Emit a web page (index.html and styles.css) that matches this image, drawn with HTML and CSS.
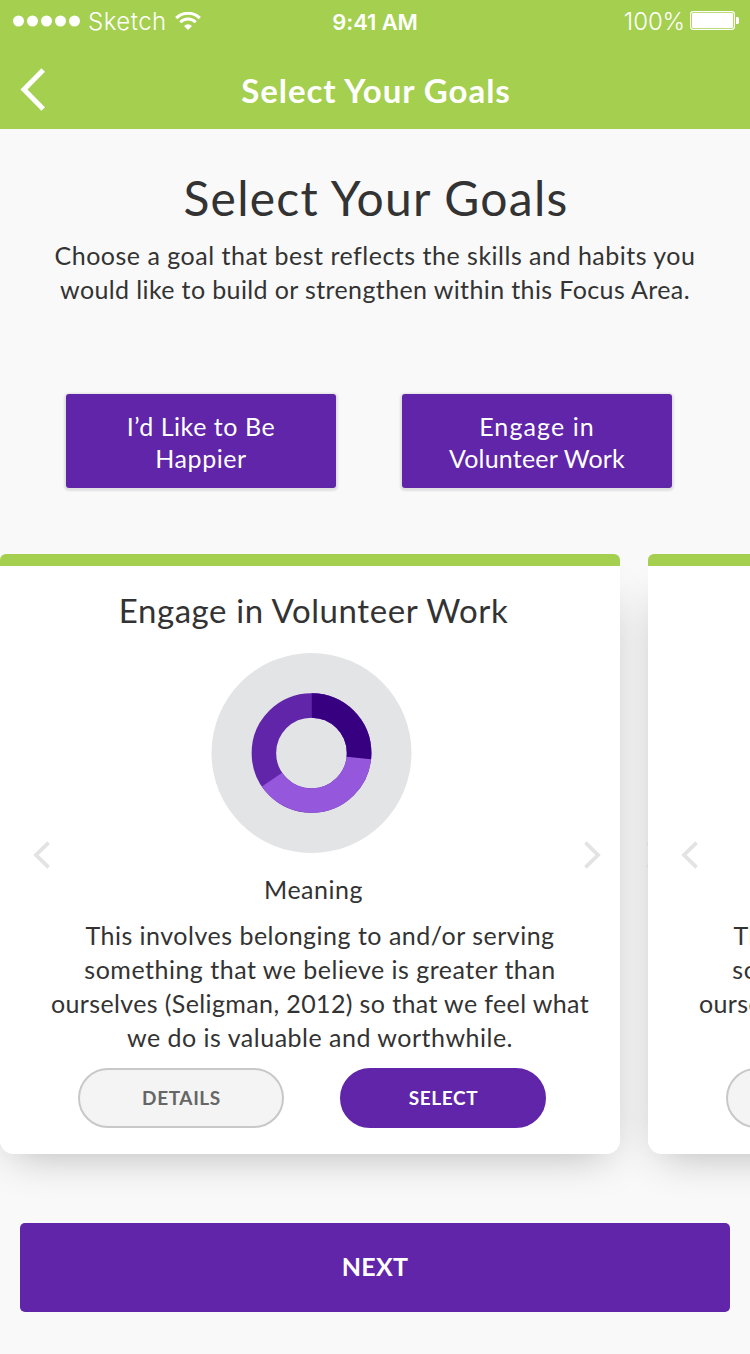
FILE: index.html
```html
<!DOCTYPE html>
<html lang="en">
<head>
<meta charset="utf-8">
<title>Select Your Goals</title>
<link rel="stylesheet" href="styles.css">
</head>
<body>
<header class="topbar">
  <div class="status">
    <div class="status-left">
      <svg class="dots" width="68" height="12" viewBox="0 0 68 12" fill="#fff"><circle cx="5.5" cy="6" r="5.5"/><circle cx="19.5" cy="6" r="5.5"/><circle cx="33.5" cy="6" r="5.5"/><circle cx="47.5" cy="6" r="5.5"/><circle cx="61.5" cy="6" r="5.5"/></svg>
      <span class="carrier">Sketch</span>
      <svg class="wifi" width="26" height="18" viewBox="0 0 26 18" fill="none" stroke="#fff"><path d="M1.2 6.2a16.6 16.6 0 0 1 23.6 0" stroke-width="3.1"/><path d="M5.3 10.3a10.8 10.8 0 0 1 15.4 0" stroke-width="2.9"/><path d="M13 18l-4-4.1a5.7 5.7 0 0 1 8 0z" fill="#fff" stroke="none"/></svg>
    </div>
    <span class="time">9:41 AM</span>
    <div class="status-right">
      <span class="percent">100%</span>
      <svg width="50" height="20" viewBox="0 0 50 20"><rect x=".6" y=".6" width="43.8" height="17.8" rx="2.6" fill="none" stroke="#fff" stroke-width="1.1"/><rect x="2" y="2" width="41" height="15" rx="1.2" fill="#fff"/><path d="M46 6h1.4q1.6 0 1.6 1.6v3.8q0 1.6-1.6 1.6H46z" fill="#fff"/></svg>
    </div>
  </div>
  <div class="nav">
    <svg class="back" width="26" height="44" viewBox="0 0 26 44" fill="none" stroke="#fff" stroke-width="5"><path d="M23.2 2L4 21.5 23.2 41"/></svg>
    <span class="nav-title">Select Your Goals</span>
  </div>
</header>

<main>
  <section class="intro">
    <h1 class="headline">Select Your Goals</h1>
    <p class="copy lead"><span class="line l1">Choose a goal that best reflects the skills and habits you</span><span class="line l2">would like to build or strengthen within this Focus Area.</span></p>
  </section>

  <div class="goals">
    <button class="goal"><span class="line g1">I’d Like to Be</span><span class="line g2">Happier</span></button>
    <button class="goal"><span class="line g3">Engage in</span><span class="line g4">Volunteer Work</span></button>
  </div>

  <section class="carousel">
    <article class="card">
      <h2 class="card-title">Engage in Volunteer Work</h2>
      <svg class="chart" width="201" height="200" viewBox="-100.5 -100 201 200" fill="none" stroke-width="24.5">
        <circle r="100" fill="#e2e4e6"/>
        <g transform="rotate(-90)">
          <circle r="47.6" pathLength="360" stroke="#6025a8"/>
          <circle r="47.6" pathLength="360" stroke="#9557db" stroke-dasharray="236 124"/>
          <circle r="47.6" pathLength="360" stroke="#370080" stroke-dasharray="96 264"/>
        </g>
      </svg>
      <h3 class="metric">Meaning</h3>
      <p class="copy detail"><span class="line d1">This involves belonging to and/or serving</span><span class="line d2">something that we believe is greater than</span><span class="line d3">ourselves (Seligman, 2012) so that we feel what</span><span class="line d4">we do is valuable and worthwhile.</span></p>
      <div class="actions"><button class="pill">DETAILS</button><button class="pill primary">SELECT</button></div>
      <svg class="arrow prev" width="18" height="28" viewBox="0 0 18 28"><path d="M15.6 1.6L3 14l12.6 12.4"/></svg>
      <svg class="arrow next-card" width="18" height="28" viewBox="0 0 18 28"><path d="M2.4 1.6L15 14 2.4 26.4"/></svg>
    </article>
    <article class="card">
      <h2 class="card-title blank">&nbsp;</h2>
      <div class="chart"></div>
      <h3 class="metric">&nbsp;</h3>
      <p class="copy detail"><span class="line d1">This involves belonging to and/or serving</span><span class="line d2">something that we believe is greater than</span><span class="line d3">ourselves (Seligman, 2012) so that we feel what</span><span class="line d4">&nbsp;</span></p>
      <div class="actions"><button class="pill"></button></div>
      <svg class="arrow prev" width="18" height="28" viewBox="0 0 18 28"><path d="M15.6 1.6L3 14l12.6 12.4"/></svg>
      <svg class="arrow under" width="18" height="28" viewBox="0 0 18 28"><path d="M2.4 1.6L15 14 2.4 26.4"/></svg>
    </article>
  </section>

  <button class="next">NEXT</button>
</main>
</body>
</html>
```

FILE: styles.css
```css
* { box-sizing: border-box; }
html { overflow: hidden; }
body {
  margin: 0;
  width: 750px;
  height: 1354px;
  overflow: hidden;
  background: #f9f9f9;
  color: #333;
  font-family: Lato, "Open Sans", sans-serif;
}
h1, h2, h3, p { margin: 0; font-weight: 400; }
button { font: inherit; border: 0; padding: 0; }
svg { display: block; flex: none; }
.line { display: block; white-space: nowrap; }

.topbar { height: 129px; background: #a4cf4f; color: #fff; }
.status {
  display: grid;
  grid-template-columns: 1fr auto 1fr;
  align-items: center;
  height: 41px;
  padding: 0 10px 0 13px;
  font: 24px/40px Inter, sans-serif;
}
.status-left, .status-right { display: flex; align-items: center; }
.status-right { justify-content: flex-end; gap: 5px; }
.carrier { margin-left: 7px; padding-top: 1px; font-weight: 300; letter-spacing: .5px; }
.wifi { margin-left: 8px; }
.time { margin-left: -3px; padding-top: 1px; font-weight: 600; font-size: 22px; letter-spacing: -.1px; }
.percent { padding-top: 2px; font-weight: 300; letter-spacing: -.1px; }
.nav { display: grid; grid-template-columns: 100px 1fr 100px; align-items: center; height: 88px; padding-top: 9px; }
.back { margin: 0 0 0 20px; }
.nav-title { padding-left: 2px; text-align: center; font-size: 33px; line-height: 40px; font-weight: 700; letter-spacing: .95px; }

.intro { padding-top: 39px; text-align: center; }
.headline { padding-left: 2px; font-size: 48px; line-height: 60px; letter-spacing: 1.25px; }
.copy { font-size: 25px; line-height: 34px; letter-spacing: .5px; }
.lead { display: flex; flex-direction: column; align-items: center; margin-top: 10px; }
.l2, .d3 { letter-spacing: .38px; }

.goals { display: flex; gap: 66px; padding: 88px 0 0 66px; }
.goal {
  width: 270px;
  height: 94px;
  padding-top: 2px;
  border-radius: 3px;
  background: #6025a8;
  color: #fff;
  font-size: 25px;
  line-height: 32px;
  letter-spacing: .55px;
  box-shadow: 0 1px 2px 2px #e0e0e2;
}
.g3 { letter-spacing: 1.1px; }
.g4 { letter-spacing: .2px; }

.carousel { display: flex; gap: 28px; width: 750px; margin-top: 66px; isolation: isolate; }
.card {
  position: relative;
  flex: none;
  width: 620px;
  height: 600px;
  border-top: 12px solid #a4cf4f;
  border-radius: 6px 6px 14px 14px;
  background: #fff;
}
.card::before {
  content: "";
  position: absolute;
  z-index: -1;
  inset: 12px 0 0;
  border-radius: 14px;
  box-shadow: 0 12px 44px -12px rgba(0, 0, 0, .28);
}
.card-title { padding: 23px 0 0 7px; text-align: center; font-size: 33px; line-height: 42px; letter-spacing: .58px; }
.chart { width: 201px; height: 200px; margin: 22px 0 0 211px; }
.metric { padding: 20px 0 0 7px; text-align: center; font-size: 25px; line-height: 32px; letter-spacing: .5px; }
.detail { display: flex; flex-direction: column; align-items: center; width: 640px; margin-top: 13px; }
.actions { display: flex; gap: 56px; padding: 14px 0 0 78px; }
.pill {
  width: 206px;
  height: 60px;
  padding: 0 0 2px 1px;
  border: 2px solid #c8c8c8;
  border-radius: 30px;
  background: #f4f4f4;
  color: #666;
  font-size: 19px;
  font-weight: 700;
  letter-spacing: .6px;
}
.primary { border-color: #6025a8; background: #6025a8; color: #fff; }
.arrow { position: absolute; top: 275px; fill: none; stroke: #e3e3e3; stroke-width: 3.8; }
.prev { left: 33px; }
.next-card { left: 583px; }
.under { left: -3px; z-index: -1; stroke: #dadada; }

.next {
  display: block;
  width: 710px;
  height: 89px;
  margin: 69px 0 0 20px;
  padding-bottom: 4px;
  border-radius: 5px;
  background: #6025a8;
  color: #fff;
  font-size: 25px;
  font-weight: 700;
  letter-spacing: .3px;
}
```
